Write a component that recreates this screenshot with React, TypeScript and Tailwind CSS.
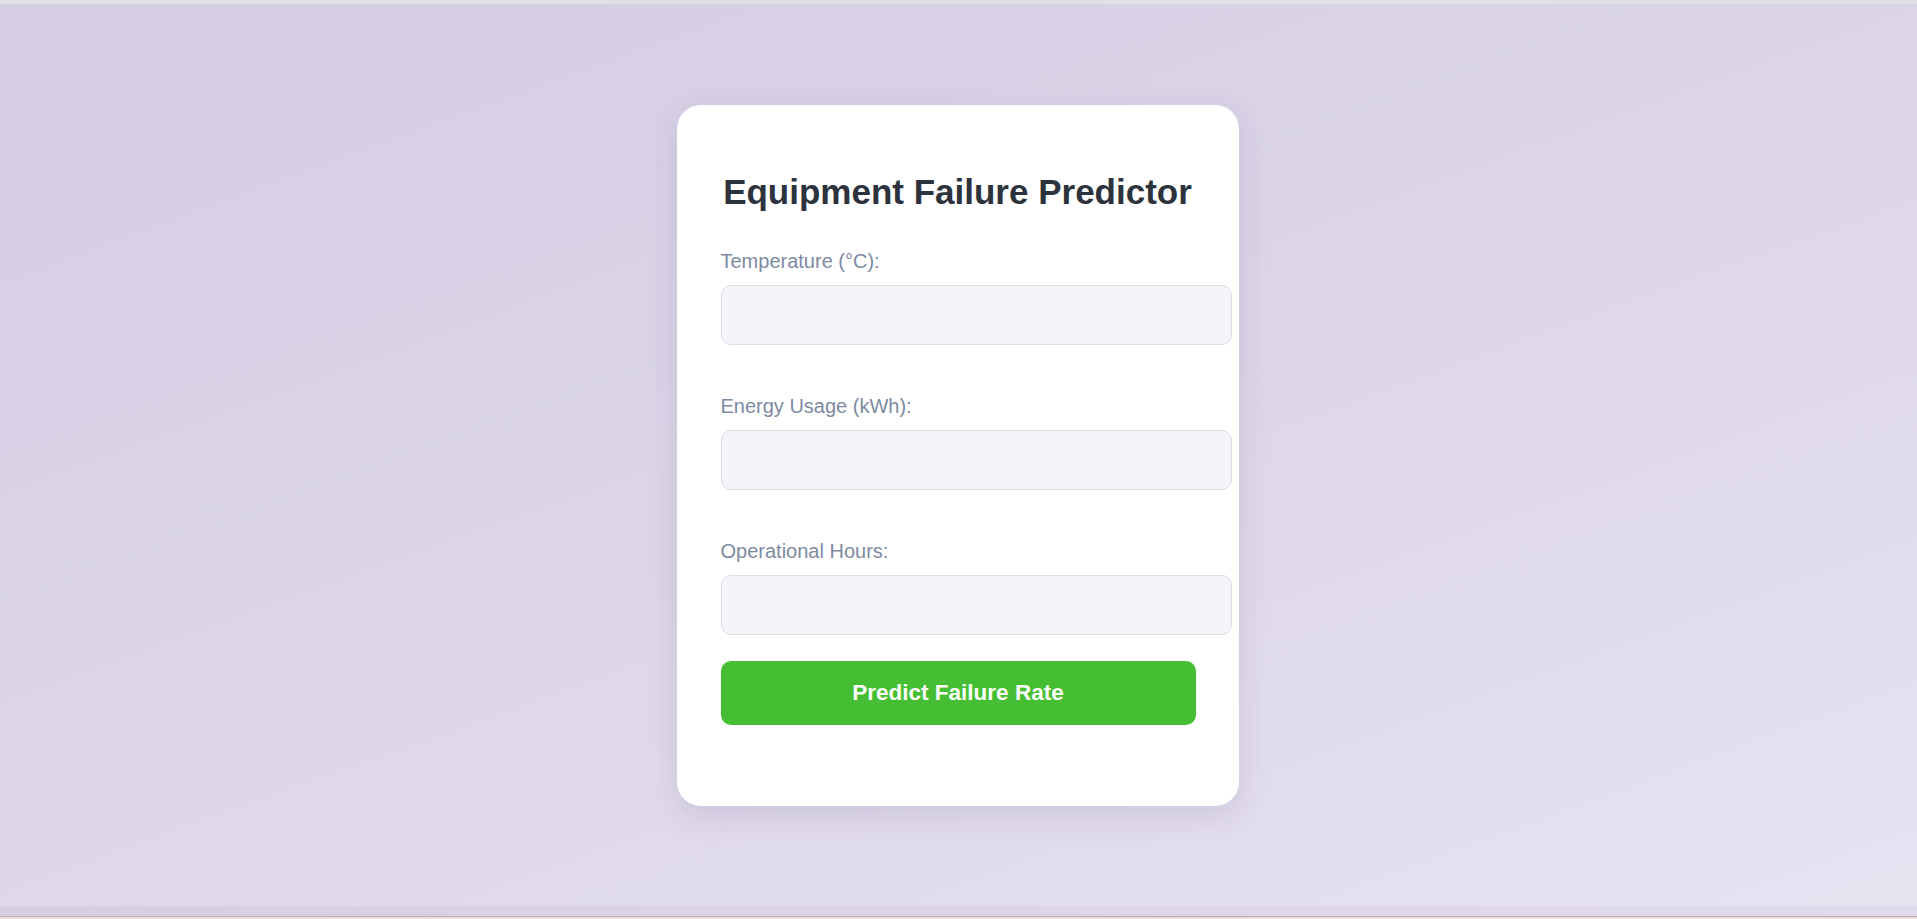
import React from "react";

const font = { fontFamily: '"Liberation Sans", Arial, sans-serif' };

function Field({ label, first }: { label: string; first?: boolean }) {
  return (
    <div className={first ? "" : "mt-[50px]"}>
      <label className="block text-[20px] leading-[22px] text-[#7d8aa2]">{label}</label>
      <input
        type="text"
        className="mt-[13px] block w-[511px] h-[60px] rounded-[10px] border border-[#dcdde4] bg-[#f4f5f9] outline-none"
      />
    </div>
  );
}

export default function App() {
  return (
    <div className="w-[1917px] h-[919px] flex flex-col overflow-hidden" style={font}>
      <div className="h-[4px] bg-[#e1e0e4]" />
      <div className="h-[902px] flex justify-center items-start pt-[101px] bg-[linear-gradient(160deg,#d4cde3_0%,#dcd6e8_50%,#e7e3f1_100%)]">
        <div className="w-[562px] h-[701px] -translate-x-[1px] bg-white rounded-[24px] shadow-[0_10px_32px_rgba(60,40,100,0.12)] pt-[67px] px-[44px]">
          <h1 className="text-center text-[35px] leading-[40px] font-bold text-[#2d333d] whitespace-nowrap">
            Equipment Failure Predictor
          </h1>
          <div className="mt-[38px]">
            <Field label="Temperature (°C):" first />
            <Field label="Energy Usage (kWh):" />
            <Field label="Operational Hours:" />
          </div>
          <button className="mt-[26px] w-[475px] h-[64px] rounded-[10px] bg-[#46be34] text-white font-bold text-[22.5px]">
            Predict Failure Rate
          </button>
        </div>
      </div>
      <div className="h-[10px] bg-[linear-gradient(90deg,#d6cfe3,#e0dbea)]" />
      <div className="h-[1px] bg-[#b7b2ba]" />
      <div className="flex-1 bg-[#eee0d8]" />
    </div>
  );
}
